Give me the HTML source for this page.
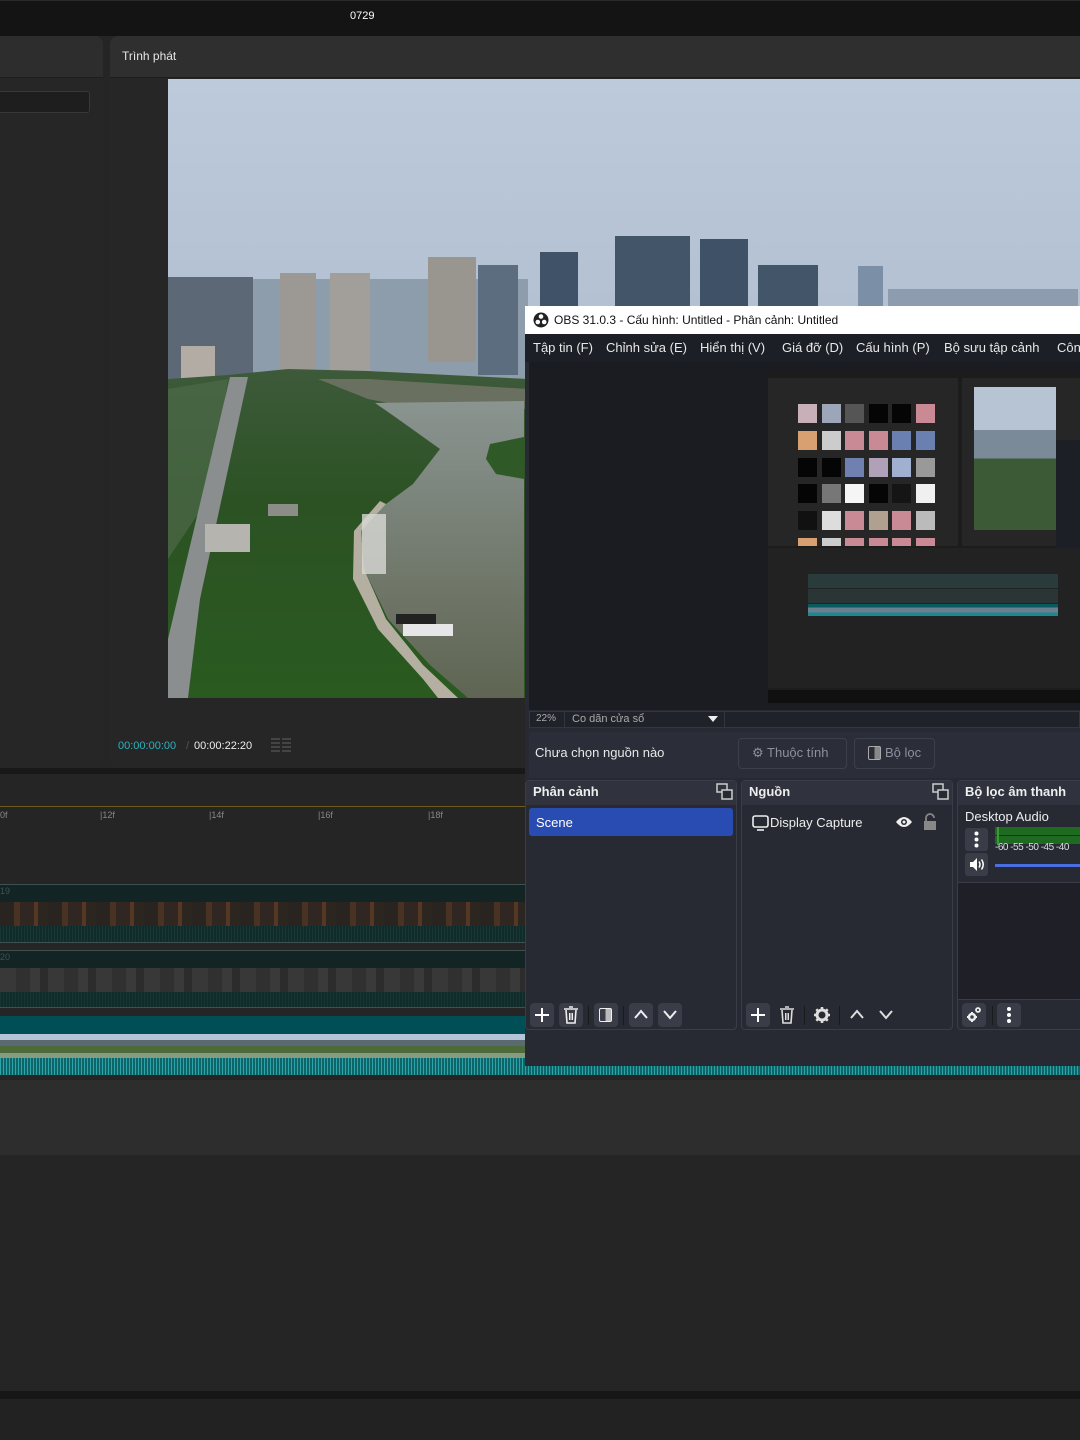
<!DOCTYPE html>
<html><head><meta charset="utf-8"><style>
*{margin:0;padding:0;box-sizing:border-box}
body{width:1080px;height:1440px;background:#252525;position:relative;overflow:hidden;font-family:"Liberation Sans","Noto Sans CJK SC",sans-serif;color:#ddd}
.a{position:absolute}
.t{position:absolute;white-space:nowrap}
.btn{position:absolute;width:24px;height:24px;background:#3a3d48;border-radius:4px}
</style></head><body>
<!-- top bar -->
<div class="a" style="left:0;top:0;width:1080px;height:36px;background:#141414;border-top:1px solid #2a2a2a"></div>
<div class="t" style="left:350px;top:10px;font-size:11px;color:#fff">0729</div>
<!-- left panel -->
<div class="a" style="left:0;top:36px;width:103px;height:732px;background:#262626;border-radius:0 8px 8px 0"></div>
<div class="a" style="left:0;top:36px;width:103px;height:42px;background:#2d2d2d;border-radius:0 8px 0 0;border-bottom:1px solid #1e1e1e"></div>
<div class="a" style="left:-4px;top:91px;width:94px;height:22px;background:#1e1e1e;border:1px solid #383838;border-radius:3px"></div>
<!-- player -->
<div class="a" style="left:110px;top:36px;width:980px;height:732px;background:#262626;border-radius:8px"></div>
<div class="a" style="left:110px;top:36px;width:980px;height:42px;background:#2f2f2f;border-radius:8px 0 0 0;border-bottom:1px solid #1e1e1e"></div>
<div class="t" style="left:122px;top:49px;font-size:12px;color:#e6e6e6">Trình phát</div>
<svg class="a" style="left:168px;top:79px" width="912" height="619" viewBox="0 0 912 619">
<defs><linearGradient id="sky" x1="0" y1="0" x2="0" y2="1"><stop offset="0" stop-color="#bccadb"/><stop offset="1" stop-color="#a3b1c3"/></linearGradient>
<linearGradient id="grn" x1="0" y1="0" x2="0" y2="1"><stop offset="0" stop-color="#3d5a3a"/><stop offset=".4" stop-color="#2c5224"/><stop offset="1" stop-color="#2a5a20"/></linearGradient>
<linearGradient id="wat" x1="0" y1="0" x2="0" y2="1"><stop offset="0" stop-color="#8a9490"/><stop offset="1" stop-color="#5f6552"/></linearGradient></defs>
<rect width="912" height="619" fill="url(#sky)"/>
<rect x="60" y="200" width="300" height="100" fill="#8e9dac"/>
<rect x="0" y="198" width="85" height="110" fill="#5c6876"/>
<rect x="112" y="194" width="36" height="100" fill="#9c9893"/>
<rect x="162" y="194" width="40" height="100" fill="#a29e99"/>
<rect x="260" y="178" width="48" height="105" fill="#99958f"/>
<rect x="310" y="186" width="40" height="110" fill="#5d6d80"/>
<rect x="13" y="267" width="34" height="40" fill="#b2aca4"/>
<rect x="372" y="173" width="38" height="55" fill="#3f5268"/>
<rect x="447" y="157" width="75" height="70" fill="#425569"/>
<rect x="532" y="160" width="48" height="68" fill="#3e5166"/>
<rect x="590" y="186" width="60" height="42" fill="#435568"/>
<rect x="690" y="187" width="25" height="40" fill="#7b8fa6"/>
<rect x="720" y="210" width="190" height="17" fill="#8e9cb0"/>
<path d="M0 300 L60 296 L120 290 L200 292 L360 300 L360 619 L0 619Z" fill="url(#grn)"/>
<path d="M0 310 L60 300 L40 420 L0 480Z" fill="#4d6a48" opacity=".7"/>
<path d="M62 298 L80 298 L32 520 L20 619 L0 619 L0 560Z" fill="#8b8e8f"/>
<path d="M150 300 L200 300 L360 310 L360 330 L250 330 L200 320Z" fill="#6a7060"/>
<path d="M207 324 L356 322 L356 619 L300 619 L262 586 L220 540 L196 490 L193 452 L218 425 L245 405 L272 370 L230 340Z" fill="url(#wat)"/>
<path d="M322 365 L356 358 L356 400 L328 395 L318 380Z" fill="#2f5a28"/>
<path d="M193 452 L218 425 L212 422 L186 452 L185 500 L210 550 L255 600 L270 619 L290 619 L255 586 L218 540 L196 490Z" fill="#b5afa2"/>
<rect x="194" y="435" width="24" height="60" fill="#d8d8d4" opacity=".8"/>
<rect x="37" y="445" width="45" height="28" fill="#b5b4ae"/>
<rect x="100" y="425" width="30" height="12" fill="#8c8c88"/>
<rect x="235" y="545" width="50" height="12" fill="#e6e6e8"/>
<rect x="228" y="535" width="40" height="10" fill="#222"/>
</svg>
<div class="t" style="left:118px;top:740px;font-size:11px;color:#2ab3bf">00:00:00:00</div>
<div class="t" style="left:186px;top:740px;font-size:11px;color:#555">/</div>
<div class="t" style="left:194px;top:740px;font-size:11px;color:#eee">00:00:22:20</div>
<div class="a" style="left:271px;top:738px;width:9px;height:16px;background:repeating-linear-gradient(#444 0 2px,transparent 2px 4px)"></div>
<div class="a" style="left:282px;top:738px;width:9px;height:16px;background:repeating-linear-gradient(#444 0 2px,transparent 2px 4px)"></div>
<!-- gap -->
<div class="a" style="left:0;top:768px;width:1080px;height:6px;background:#181818"></div>
<!-- timeline -->
<div class="a" style="left:0;top:774px;width:525px;height:306px;background:#252525"></div>
<div class="a" style="left:0;top:806px;width:525px;height:1px;background:#6e5a1c"></div>
<div class="t" style="left:0;top:810px;font-size:9px;color:#888">0f</div>
<div class="t" style="left:100px;top:810px;font-size:9px;color:#888">|12f</div>
<div class="t" style="left:209px;top:810px;font-size:9px;color:#888">|14f</div>
<div class="t" style="left:318px;top:810px;font-size:9px;color:#888">|16f</div>
<div class="t" style="left:428px;top:810px;font-size:9px;color:#888">|18f</div>
<div class="a" style="left:0;top:884px;width:525px;height:59px;background:#122424;border-top:1px solid #3e5050;border-bottom:1px solid #3e5050"></div>
<div class="a" style="left:0;top:902px;width:525px;height:24px;background:repeating-linear-gradient(90deg,#2a2420 0 14px,#4a3220 14px 20px,#302722 20px 34px,#553822 34px 38px,#2c2520 38px 48px)"></div>
<div class="a" style="left:0;top:926px;width:525px;height:16px;background:repeating-linear-gradient(90deg,#183838 0 1px,#112a2a 1px 3px)"></div>
<div class="t" style="left:0;top:886px;font-size:9px;color:#3c5555">19</div>
<div class="a" style="left:0;top:950px;width:525px;height:58px;background:#122424;border-top:1px solid #3e5050;border-bottom:1px solid #3e5050"></div>
<div class="a" style="left:0;top:968px;width:525px;height:24px;background:repeating-linear-gradient(90deg,#383838 0 16px,#303030 16px 30px,#3a3a3a 30px 40px,#2c2c2c 40px 48px)"></div>
<div class="a" style="left:0;top:992px;width:525px;height:15px;background:repeating-linear-gradient(90deg,#173535 0 1px,#112a2a 1px 3px)"></div>
<div class="t" style="left:0;top:952px;font-size:9px;color:#3c5555">20</div>
<div class="a" style="left:0;top:1016px;width:525px;height:18px;background:#004f57"></div>
<div class="a" style="left:0;top:1034px;width:525px;height:24px;background:linear-gradient(#b5c4d6 0 25%,#5a6a70 25% 50%,#4c6a3a 50% 80%,#8a9a80 80%)"></div>
<div class="a" style="left:0;top:1058px;width:525px;height:8px;background:repeating-linear-gradient(90deg,#2aa6aa 0 1px,#0f6468 1px 3px)"></div>
<div class="a" style="left:0;top:1066px;width:1080px;height:9px;background:repeating-linear-gradient(90deg,#2aa6aa 0 1px,#0f6468 1px 3px)"></div>
<div class="a" style="left:0;top:1080px;width:1080px;height:75px;background:#2d2d2d"></div>
<div class="a" style="left:0;top:1155px;width:1080px;height:236px;background:#252525"></div>
<div class="a" style="left:0;top:1391px;width:1080px;height:8px;background:#161616"></div>
<div class="a" style="left:0;top:1399px;width:1080px;height:41px;background:#222"></div>
<!-- OBS window -->
<div class="a" style="left:525px;top:306px;width:555px;height:760px;background:#272a33"></div>
<div class="a" style="left:525px;top:306px;width:555px;height:28px;background:#fff"></div>
<svg class="a" style="left:533px;top:312px" width="16" height="16" viewBox="0 0 16 16"><circle cx="8" cy="8" r="7.5" fill="#222"/><circle cx="8" cy="4.5" r="2.3" fill="#fff"/><circle cx="4.8" cy="10" r="2.3" fill="#fff"/><circle cx="11.2" cy="10" r="2.3" fill="#fff"/></svg>
<div class="t" style="left:554px;top:313px;font-size:12px;color:#111">OBS 31.0.3 - Cấu hình: Untitled - Phân cảnh: Untitled</div>
<div class="a" style="left:525px;top:334px;width:555px;height:28px;background:#1d1f26"></div>
<div class="t" style="left:533px;top:340px;font-size:13px;color:#e8e8e8">Tập tin (F)</div>
<div class="t" style="left:606px;top:340px;font-size:13px;color:#e8e8e8">Chỉnh sửa (E)</div>
<div class="t" style="left:700px;top:340px;font-size:13px;color:#e8e8e8">Hiển thị (V)</div>
<div class="t" style="left:782px;top:340px;font-size:13px;color:#e8e8e8">Giá đỡ (D)</div>
<div class="t" style="left:856px;top:340px;font-size:13px;color:#e8e8e8">Cấu hình (P)</div>
<div class="t" style="left:944px;top:340px;font-size:13px;color:#e8e8e8">Bộ sưu tập cảnh</div>
<div class="t" style="left:1057px;top:340px;font-size:13px;color:#e8e8e8">Côn</div>
<div class="a" style="left:529px;top:362px;width:551px;height:348px;background:#1b1c21"></div>
<!-- mini capture -->
<div class="a" style="left:767px;top:372px;width:313px;height:331px;background:#1c1c1c"></div>
<div class="a" style="left:768px;top:378px;width:190px;height:168px;background:#262626"></div>
<svg class="a" style="left:798px;top:404px" width="140" height="142">
<g fill="#c98a96"><rect x="0" y="0" width="19" height="19" fill="#c9b0b8"/><rect x="24" y="0" width="19" height="19" fill="#9da5b8"/><rect x="47" y="0" width="19" height="19" fill="#555"/><rect x="71" y="0" width="19" height="19" fill="#050505"/><rect x="94" y="0" width="19" height="19" fill="#050505"/><rect x="118" y="0" width="19" height="19"/>
<rect x="0" y="27" width="19" height="19" fill="#d8a070"/><rect x="24" y="27" width="19" height="19" fill="#ccc"/><rect x="47" y="27" width="19" height="19"/><rect x="71" y="27" width="19" height="19"/><rect x="94" y="27" width="19" height="19" fill="#6a80b0"/><rect x="118" y="27" width="19" height="19" fill="#6a80b0"/>
<rect x="0" y="54" width="19" height="19" fill="#050505"/><rect x="24" y="54" width="19" height="19" fill="#050505"/><rect x="47" y="54" width="19" height="19" fill="#7080b0"/><rect x="71" y="54" width="19" height="19" fill="#b0a0b8"/><rect x="94" y="54" width="19" height="19" fill="#a0b0d0"/><rect x="118" y="54" width="19" height="19" fill="#999"/>
<rect x="0" y="80" width="19" height="19" fill="#050505"/><rect x="24" y="80" width="19" height="19" fill="#777"/><rect x="47" y="80" width="19" height="19" fill="#f5f5f5"/><rect x="71" y="80" width="19" height="19" fill="#050505"/><rect x="94" y="80" width="19" height="19" fill="#151515"/><rect x="118" y="80" width="19" height="19" fill="#f0f0f0"/>
<rect x="0" y="107" width="19" height="19" fill="#111"/><rect x="24" y="107" width="19" height="19" fill="#ddd"/><rect x="47" y="107" width="19" height="19"/><rect x="71" y="107" width="19" height="19" fill="#b0a090"/><rect x="94" y="107" width="19" height="19"/><rect x="118" y="107" width="19" height="19" fill="#bbb"/>
<rect x="0" y="134" width="19" height="8" fill="#d8a070"/><rect x="24" y="134" width="19" height="8" fill="#ccc"/><rect x="47" y="134" width="19" height="8"/><rect x="71" y="134" width="19" height="8"/><rect x="94" y="134" width="19" height="8"/><rect x="118" y="134" width="19" height="8"/></g></svg>
<div class="a" style="left:962px;top:378px;width:118px;height:168px;background:#262626"></div>
<div class="a" style="left:974px;top:387px;width:82px;height:143px;background:linear-gradient(#b6c4d4 0 30%,#7a8a98 30% 50%,#3c5a35 50% 100%)"></div>
<div class="a" style="left:1056px;top:440px;width:24px;height:110px;background:#1d1f26"></div>
<div class="a" style="left:768px;top:548px;width:312px;height:140px;background:#222"></div>
<div class="a" style="left:808px;top:574px;width:250px;height:14px;background:#2a3b3b"></div>
<div class="a" style="left:808px;top:589px;width:250px;height:14px;background:#2a3535"></div>
<div class="a" style="left:808px;top:604px;width:250px;height:12px;background:linear-gradient(#0a5a60 0 30%,#6a8090 30% 70%,#1a8a8f 70%)"></div>
<div class="a" style="left:768px;top:690px;width:312px;height:13px;background:#101010"></div>
<!-- zoom bar -->
<div class="a" style="left:529px;top:711px;width:551px;height:17px;background:#20222a;border:1px solid #33363f"></div>
<div class="t" style="left:536px;top:713px;font-size:10px;color:#aaa">22%</div>
<div class="a" style="left:564px;top:711px;width:1px;height:17px;background:#33363f"></div>
<div class="t" style="left:572px;top:713px;font-size:11px;color:#aaa">Co dãn cửa sổ</div>
<div class="a" style="left:708px;top:716px;border-left:5px solid transparent;border-right:5px solid transparent;border-top:6px solid #eee"></div>
<div class="a" style="left:724px;top:711px;width:1px;height:17px;background:#33363f"></div>
<!-- selection bar -->
<div class="a" style="left:529px;top:732px;width:551px;height:46px;background:#2b2e38"></div>
<div class="t" style="left:535px;top:745px;font-size:13px;color:#e8e8e8">Chưa chọn nguồn nào</div>
<div class="a" style="left:738px;top:738px;width:109px;height:31px;border:1px solid #3c404b;border-radius:4px"></div>
<div class="t" style="left:752px;top:745px;font-size:13px;color:#8c919b">⚙ Thuộc tính</div>
<div class="a" style="left:854px;top:738px;width:81px;height:31px;border:1px solid #3c404b;border-radius:4px"></div>
<div class="a" style="left:868px;top:746px;width:13px;height:14px;border:1.5px solid #aaa;border-radius:2px;background:linear-gradient(90deg,transparent 50%,#888 50%)"></div>
<div class="t" style="left:885px;top:745px;font-size:13px;color:#8c919b">Bộ lọc</div>
<!-- docks -->
<div class="a" style="left:525px;top:780px;width:212px;height:250px;background:#272a33;border:1px solid #3a3d47;border-radius:4px"></div>
<div class="a" style="left:526px;top:781px;width:210px;height:24px;background:#30333d"></div>
<div class="t" style="left:533px;top:784px;font-size:13px;font-weight:bold;color:#eee">Phân cảnh</div>
<div class="a" style="left:529px;top:808px;width:204px;height:28px;background:#284cb2;border-radius:3px"></div>
<div class="t" style="left:536px;top:815px;font-size:13px;color:#fff">Scene</div>
<div class="a" style="left:741px;top:780px;width:212px;height:250px;background:#272a33;border:1px solid #3a3d47;border-radius:4px"></div>
<div class="a" style="left:742px;top:781px;width:210px;height:24px;background:#30333d"></div>
<div class="t" style="left:749px;top:784px;font-size:13px;font-weight:bold;color:#eee">Nguồn</div>
<svg class="a" style="left:716px;top:783px" width="18" height="18"><rect x="1" y="1" width="10" height="8" fill="none" stroke="#ccc" stroke-width="1.5"/><rect x="6" y="7" width="10" height="9" fill="#272a33" stroke="#ccc" stroke-width="1.5"/></svg>
<svg class="a" style="left:932px;top:783px" width="18" height="18"><rect x="1" y="1" width="10" height="8" fill="none" stroke="#ccc" stroke-width="1.5"/><rect x="6" y="7" width="10" height="9" fill="#272a33" stroke="#ccc" stroke-width="1.5"/></svg>
<svg class="a" style="left:752px;top:815px" width="17" height="16"><rect x="1" y="1" width="15" height="11" rx="2" fill="none" stroke="#eee" stroke-width="1.6"/><path d="M5 15h7" stroke="#eee" stroke-width="1.6"/></svg>
<div class="t" style="left:770px;top:815px;font-size:13px;color:#eee">Display Capture</div>
<svg class="a" style="left:895px;top:815px" width="18" height="14"><path d="M1 7Q9 -3 17 7Q9 17 1 7Z" fill="#eee"/><circle cx="9" cy="7" r="3" fill="#272a33"/><circle cx="9" cy="7" r="1.5" fill="#eee"/></svg>
<svg class="a" style="left:923px;top:813px" width="14" height="18"><path d="M3 8V5a4 4 0 0 1 8 0" fill="none" stroke="#888" stroke-width="1.8"/><rect x="1" y="8" width="12" height="9" fill="#888"/></svg>
<div class="a" style="left:957px;top:780px;width:130px;height:250px;background:#272a33;border:1px solid #3a3d47;border-radius:4px"></div>
<div class="a" style="left:958px;top:781px;width:130px;height:24px;background:#30333d"></div>
<div class="t" style="left:965px;top:784px;font-size:13px;font-weight:bold;color:#eee">Bộ lọc âm thanh</div>
<div class="a" style="left:958px;top:882px;width:122px;height:118px;background:#1f2027;border-top:1px solid #3a3d47;border-bottom:1px solid #3a3d47"></div>
<div class="t" style="left:965px;top:809px;font-size:13px;color:#eee">Desktop Audio</div>
<div class="a" style="left:965px;top:828px;width:23px;height:23px;background:#3a3d48;border-radius:3px"></div>
<svg class="a" style="left:965px;top:828px" width="23" height="23"><circle cx="11.5" cy="5.5" r="2" fill="#fff"/><circle cx="11.5" cy="11.5" r="2" fill="#fff"/><circle cx="11.5" cy="17.5" r="2" fill="#fff"/></svg>
<div class="a" style="left:965px;top:853px;width:23px;height:23px;background:#3a3d48;border-radius:3px"></div>
<svg class="a" style="left:965px;top:853px" width="23" height="23"><path d="M5 9h3l4-4v13l-4-4H5z" fill="#fff"/><path d="M14 8.5q2 3 0 6M16.5 6.5q3.5 5 0 10" fill="none" stroke="#fff" stroke-width="1.5"/></svg>
<div class="a" style="left:995px;top:827px;width:85px;height:8px;background:#1d6a20"></div>
<div class="a" style="left:995px;top:836px;width:85px;height:8px;background:#1d6a20"></div>
<div class="a" style="left:997px;top:827px;width:2px;height:18px;background:#3a9a3a"></div>
<div class="t" style="left:995px;top:842px;font-size:10px;color:#ddd;letter-spacing:-0.5px">-60 -55 -50 -45 -40</div>
<div class="a" style="left:995px;top:864px;width:85px;height:3px;background:#4a6ee0"></div>
<!-- toolbar buttons -->
<div class="btn" style="left:530px;top:1003px"></div><svg class="a" style="left:530px;top:1003px" width="24" height="24"><path d="M12 5v14M5 12h14" stroke="#fff" stroke-width="2"/></svg>
<div class="btn" style="left:559px;top:1003px"></div><svg class="a" style="left:563px;top:1006px" width="16" height="18"><path d="M1 3h14M6 1h4M3 4l1 13h8l1-13" fill="none" stroke="#eee" stroke-width="1.6"/><path d="M6.5 7v7M8 7v7M9.5 7v7" stroke="#eee"/></svg>
<div class="a" style="left:588px;top:1006px;width:1px;height:19px;background:#1a1a1a"></div>
<div class="btn" style="left:594px;top:1003px"></div><div class="a" style="left:599px;top:1008px;width:13px;height:14px;border:1.5px solid #eee;border-radius:2px;background:linear-gradient(90deg,transparent 50%,#bbb 50%)"></div>
<div class="a" style="left:623px;top:1006px;width:1px;height:19px;background:#1a1a1a"></div>
<div class="btn" style="left:629px;top:1003px"></div><svg class="a" style="left:633px;top:1008px" width="16" height="12"><path d="M2 10L8 3l6 7" fill="none" stroke="#eee" stroke-width="2"/></svg>
<div class="btn" style="left:658px;top:1003px"></div><svg class="a" style="left:662px;top:1009px" width="16" height="12"><path d="M2 2l6 7 6-7" fill="none" stroke="#eee" stroke-width="2"/></svg>
<div class="btn" style="left:746px;top:1003px"></div><svg class="a" style="left:746px;top:1003px" width="24" height="24"><path d="M12 5v14M5 12h14" stroke="#fff" stroke-width="2"/></svg>
<svg class="a" style="left:779px;top:1006px" width="16" height="18"><path d="M1 3h14M6 1h4M3 4l1 13h8l1-13" fill="none" stroke="#ddd" stroke-width="1.6"/><path d="M6.5 7v7M8 7v7M9.5 7v7" stroke="#ddd"/></svg>
<div class="a" style="left:804px;top:1006px;width:1px;height:19px;background:#1a1a1a"></div>
<svg class="a" style="left:813px;top:1006px" width="18" height="18"><circle cx="9" cy="9" r="5" fill="none" stroke="#ddd" stroke-width="3"/><path d="M9 1v4M9 13v4M1 9h4M13 9h4M3.3 3.3l2.8 2.8M11.9 11.9l2.8 2.8M3.3 14.7l2.8-2.8M11.9 6.1l2.8-2.8" stroke="#ddd" stroke-width="2.5"/></svg>
<div class="a" style="left:839px;top:1006px;width:1px;height:19px;background:#1a1a1a"></div>
<svg class="a" style="left:849px;top:1008px" width="16" height="12"><path d="M2 10L8 3l6 7" fill="none" stroke="#ddd" stroke-width="2"/></svg>
<svg class="a" style="left:878px;top:1009px" width="16" height="12"><path d="M2 2l6 7 6-7" fill="none" stroke="#ddd" stroke-width="2"/></svg>
<div class="btn" style="left:962px;top:1003px"></div>
<svg class="a" style="left:962px;top:1003px" width="24" height="24"><circle cx="10" cy="14" r="3" fill="none" stroke="#eee" stroke-width="2.5"/><path d="M10 9v2M10 17v2M5 14h2M13 14h2" stroke="#eee" stroke-width="2"/><circle cx="16" cy="7" r="2" fill="none" stroke="#eee" stroke-width="1.8"/></svg>
<div class="a" style="left:992px;top:1006px;width:1px;height:19px;background:#1a1a1a"></div>
<div class="btn" style="left:997px;top:1003px"></div>
<svg class="a" style="left:997px;top:1003px" width="24" height="24"><circle cx="12" cy="6" r="2" fill="#fff"/><circle cx="12" cy="12" r="2" fill="#fff"/><circle cx="12" cy="18" r="2" fill="#fff"/></svg>
</body></html>
